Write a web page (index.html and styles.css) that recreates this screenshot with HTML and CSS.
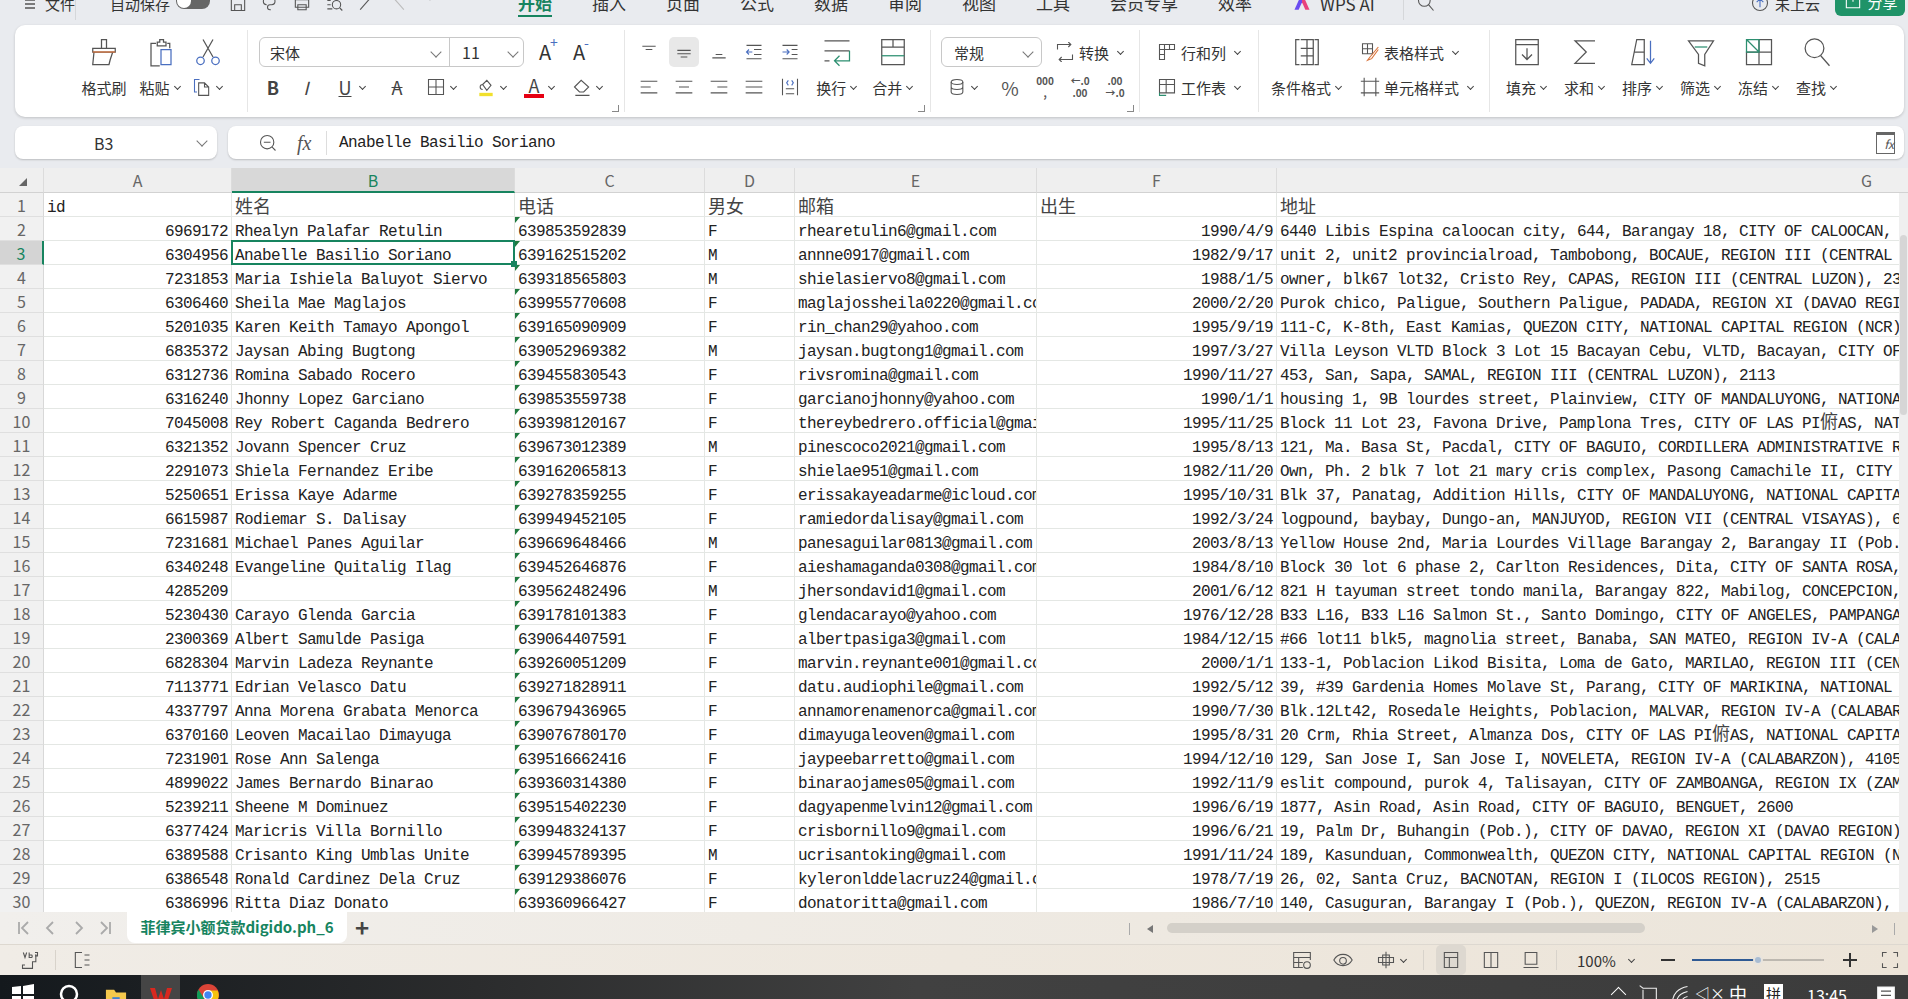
FILE: index.html
```html
<!DOCTYPE html>
<html lang="zh-CN">
<head>
    <meta charset="UTF-8">
    <title>digido.ph_6 - WPS</title>
    <link rel="stylesheet" href="styles.css">
</head>
<body>
    <header class="topbar">
        <div class="topbar-inner">
            <div class="quick">
                <svg class="menu-ic" viewBox="0 0 12 12"><path d="M1 3h10M1 7h10M1 11h10"/></svg>
                <span class="file-menu">文件</span>
                <span class="vsep"></span>
                <span class="autosave">自动保存</span>
                <span class="toggle"><i></i></span>
                <svg class="ic" viewBox="0 0 24 24"><path d="M4 3h13l3 3v15H4zM8 21v-7h8v7"/></svg>
                <svg class="ic" viewBox="0 0 24 24"><path d="M8 14a4 4 0 0 1 0-8h6a4 4 0 0 1 0 8h-2a3 3 0 0 0 0 6h1"/></svg>
                <svg class="ic" viewBox="0 0 24 24"><path d="M6 8V3h12v5M4 8h16v9H4zM7 14h10v6H7z"/></svg>
                <svg class="ic" viewBox="0 0 24 24"><path d="M4 4h8M4 9h4M4 14h4M4 19h6"/><circle cx="15" cy="14" r="5"/><path d="M19 18l3 3"/></svg>
                <svg class="ic" viewBox="0 0 24 24"><path d="M5 20L19 4"/></svg>
                <svg class="ic faint" viewBox="0 0 24 24"><path d="M19 20L5 4"/></svg>
                <svg class="ic" viewBox="0 0 24 24"><path d="M6 2l6 6 6-6"/></svg>
            </div>
            <nav class="tabs">
                <span class="tab active">开始</span>
                <span class="tab">插入</span>
                <span class="tab">页面</span>
                <span class="tab">公式</span>
                <span class="tab">数据</span>
                <span class="tab">审阅</span>
                <span class="tab">视图</span>
                <span class="tab">工具</span>
                <span class="tab">会员专享</span>
                <span class="tab">效率</span>
            </nav>
            <div class="wps-ai">
                <svg class="ai-logo" viewBox="0 0 24 24"><path class="ai-a" d="M12 0L3 20h5l4-9z"/><path class="ai-b" d="M12 0l9 20h-5l-4-9z"/></svg>
                <span class="ai-name">WPS AI</span>
                <span class="vsep"></span>
                <svg class="ic" viewBox="0 0 24 24"><circle cx="10" cy="9" r="7"/><path d="M15 14l6 7"/></svg>
            </div>
            <div class="cloud">
                <svg class="ic" viewBox="0 0 24 24"><circle cx="12" cy="12" r="9"/><path class="blue" d="M12 17V8M8 11l4-4 4 4"/></svg>
                <span>未上云</span>
            </div>
            <div class="share">
                <svg class="ic white" viewBox="0 0 24 24"><path d="M4 10v10h16V10M12 3v10"/></svg>
                <span>分享</span>
            </div>
        </div>
    </header>

    <section class="ribbon">
        <div class="group g-clip">
            <div class="tool col-brush">
                <span class="icon-box">
                    <svg class="ic-big" viewBox="0 0 24 24"><path d="M10 2h4v7h-4zM3 9h18v3H3zM4 12l-1 10h13l1-4 2-6"/><path class="orange" d="M3 12h18"/></svg>
                </span>
                <span class="lbl">格式刷</span>
            </div>
            <div class="tool col-paste">
                <span class="icon-box">
                    <svg class="ic-big" viewBox="0 0 24 24"><path d="M9 4h2V2h3v2h2v3H9zM8 5H4v18h7M17 5h2v4"/><path class="blue" d="M12 10h8v12h-8z"/></svg>
                </span>
                <span class="lbl">粘贴<i class="caret"></i></span>
            </div>
            <div class="tool col-cut">
                <span class="icon-box">
                    <svg class="ic-big" viewBox="0 0 24 24"><path d="M8 16L16 2M16 16L8 2"/><circle class="blue" cx="6" cy="19" r="3"/><circle class="blue" cx="18" cy="19" r="3"/></svg>
                </span>
                <span class="drop">
                    <svg class="ic" viewBox="0 0 24 24"><path class="blue" d="M9 3H3v15h3"/><path d="M8 7h7l5 5v10H8zM15 7v5h5"/></svg>
                    <i class="caret"></i>
                </span>
            </div>
        </div>

        <div class="group g-font">
            <div class="row">
                <div class="select font-select">
                    <span class="font-name">宋体</span><i class="chev"></i>
                    <span class="font-size">11</span><i class="chev"></i>
                </div>
                <span class="grow-a">A<sup class="blue-txt">+</sup></span>
                <span class="grow-a">A<sup class="blue-txt">-</sup></span>
            </div>
            <div class="row row-b">
                <span class="glyph bold">B</span>
                <span class="glyph italic">I</span>
                <span class="drop b-under"><span class="glyph under">U</span><i class="caret"></i></span>
                <span class="glyph strike">A</span>
                <span class="drop b-border">
                    <svg class="ic" viewBox="0 0 24 24"><path d="M3 3h18v18H3zM12 3v18M3 12h18"/></svg>
                    <i class="caret"></i>
                </span>
                <span class="drop b-fill">
                    <svg class="ic" viewBox="0 0 24 24"><path d="M8 9l5-5 5 6-5 6zM8 9a3 3 0 0 0 0 6"/><path class="yellow" d="M4 21h16"/></svg>
                    <i class="caret"></i>
                </span>
                <span class="drop">
                    <span class="glyph color-a">A</span>
                    <i class="caret"></i>
                </span>
                <span class="drop">
                    <svg class="ic" viewBox="0 0 24 24"><path d="M3 12l8-8 9 8-6 6H9zM4 22h17"/></svg>
                    <i class="caret"></i>
                </span>
            </div>
            <i class="launcher"></i>
        </div>

        <div class="group g-align">
            <div class="align-grid">
                <svg class="ic" viewBox="0 0 24 24"><path d="M4 5h16M8 9h8"/></svg>
                <span class="on"><svg class="ic" viewBox="0 0 24 24"><path d="M4 10h16M4 14h16M8 18h8"/></svg></span>
                <svg class="ic" viewBox="0 0 24 24"><path d="M8 15h8M4 19h16"/></svg>
                <svg class="ic" viewBox="0 0 24 24"><path d="M3 4h18M3 20h18M12 9h9M12 15h9"/><path class="blue" d="M10 12H3M6 9l-3 3 3 3"/></svg>
                <svg class="ic" viewBox="0 0 24 24"><path d="M3 4h18M3 20h18M14 9h7M14 15h7"/><path class="blue" d="M3 12h8M8 9l3 3-3 3"/></svg>
                <svg class="ic-big" viewBox="0 0 24 24"><path d="M2 3h20M2 11h20M2 19h4"/><path class="green" d="M22 11v8H10M14 15l-4 4 4 4"/></svg>
                <svg class="ic-big" viewBox="0 0 24 24"><path d="M3 2h18v20H3zM3 8h18M12 2v6"/><path class="green" d="M3 15h18"/></svg>
                <svg class="ic" viewBox="0 0 24 24"><path d="M2 5h20M2 12h12M2 19h20"/></svg>
                <svg class="ic" viewBox="0 0 24 24"><path d="M2 5h20M6 12h12M2 19h20"/></svg>
                <svg class="ic" viewBox="0 0 24 24"><path d="M2 5h20M10 12h12M2 19h20"/></svg>
                <svg class="ic" viewBox="0 0 24 24"><path d="M2 5h20M2 12h20M2 19h20"/></svg>
                <svg class="ic" viewBox="0 0 24 24"><path d="M3 2v20M21 2v20M7 14h10M7 20h10"/><path class="blue" d="M10 4L8 7l2 3M14 4l2 3-2 3"/></svg>
                <span class="lbl">换行<i class="caret"></i></span>
                <span class="lbl">合并<i class="caret"></i></span>
            </div>
            <i class="launcher"></i>
        </div>

        <div class="group g-num">
            <div class="row">
                <div class="select num-select"><span class="num-name">常规</span><i class="chev"></i></div>
                <span class="with-ic convert">
                    <svg class="ic" viewBox="0 0 24 24"><path d="M3 9V3h16M16 0l3 3-3 3M21 15v6H5M8 18l-3 3 3 3"/></svg>
                    转换<i class="caret"></i>
                </span>
            </div>
            <div class="row row-num">
                <span class="drop">
                    <svg class="ic" viewBox="0 0 24 24"><ellipse cx="12" cy="6" rx="7" ry="3"/><path d="M5 6v12c0 4 14 4 14 0V6M5 12c0 4 14 4 14 0"/></svg>
                    <i class="caret"></i>
                </span>
                <span class="num-btn percent">%</span>
                <span class="num-btn stack">000<br>,</span>
                <span class="num-btn stack">←.0<br>.00</span>
                <span class="num-btn stack">.00<br>→.0</span>
            </div>
            <i class="launcher"></i>
        </div>

        <div class="group g-cells">
            <span class="with-ic">
                <svg class="ic" viewBox="0 0 24 24"><path d="M3 3h6v18H3zM3 9h6M3 15h6M9 3h12v6H9zM15 3v6"/></svg>
                行和列<i class="caret"></i>
            </span>
            <span class="with-ic second">
                <svg class="ic" viewBox="0 0 24 24"><path d="M3 3h18v16H3zM3 9h18M11 3v16"/><path class="green" d="M3 19v3h8"/></svg>
                工作表<i class="caret"></i>
            </span>
        </div>

        <div class="group g-style">
            <div class="tool col-cond">
                <span class="icon-box">
                    <svg class="ic-big" viewBox="0 0 24 24"><path d="M6 2H3v20h3M18 2h3v20h-3M7 2h10v20H7M7 9h5v6H7M12 9h5M12 15h5M12 2v7M12 15v7"/></svg>
                </span>
                <span class="lbl">条件格式<i class="caret"></i></span>
            </div>
            <div class="style-col">
                <span class="with-ic">
                    <svg class="ic" viewBox="0 0 24 24"><path d="M3 2h12v12H3zM3 8h12M9 2v12"/><path class="orange" d="M22 6L12 18l-3 4 5-2 8-11"/></svg>
                    表格样式<i class="caret"></i>
                </span>
                <span class="with-ic second">
                    <svg class="ic" viewBox="0 0 24 24"><path d="M5 1v22M19 1v22M1 5h22M1 19h22"/></svg>
                    单元格样式<i class="caret"></i>
                </span>
            </div>
        </div>

        <div class="group g-edit">
            <div class="tool">
                <span class="icon-box"><svg class="ic-big" viewBox="0 0 24 24"><path d="M3 2h18v20H3zM3 6h18M12 9v9M8 14l4 4 4-4"/></svg></span>
                <span class="lbl">填充<i class="caret"></i></span>
            </div>
            <div class="tool">
                <span class="icon-box"><svg class="ic-big" viewBox="0 0 24 24"><path d="M20 3H4l9 9-9 9h16"/></svg></span>
                <span class="lbl">求和<i class="caret"></i></span>
            </div>
            <div class="tool">
                <span class="icon-box"><svg class="ic-big" viewBox="0 0 24 24"><path d="M7 2h6v20H3zM5 12h8"/><path class="blue" d="M18 3v18M15 17l3 4 3-4"/></svg></span>
                <span class="lbl">排序<i class="caret"></i></span>
            </div>
            <div class="tool">
                <span class="icon-box"><svg class="ic-big" viewBox="0 0 24 24"><path d="M2 3h20l-7 11v9l-5-2v-7z"/><path class="green" d="M7 8h10"/></svg></span>
                <span class="lbl">筛选<i class="caret"></i></span>
            </div>
            <div class="tool">
                <span class="icon-box"><svg class="ic-big" viewBox="0 0 24 24"><path d="M12 12h10v10H2V12h10v10M12 12V2h10v10"/><path class="green" d="M2 12V2h10v10zM2 2l10 10"/></svg></span>
                <span class="lbl">冻结<i class="caret"></i></span>
            </div>
            <div class="tool">
                <span class="icon-box"><svg class="ic-big" viewBox="0 0 24 24"><circle cx="10" cy="9" r="7.5"/><path d="M15 15l7 8"/></svg></span>
                <span class="lbl">查找<i class="caret"></i></span>
            </div>
        </div>
    </section>

    <section class="formula-bar">
        <div class="name-box"><span>B3</span><i class="chev"></i></div>
        <div class="formula">
            <svg class="ic zoom-ic" viewBox="0 0 24 24"><circle cx="11" cy="11" r="8"/><path d="M17 17l4 4M7 11h8"/></svg>
            <span class="fx">fx</span>
            <span class="formula-text">Anabelle Basilio Soriano</span>
            <span class="fx-box"><span>fx</span></span>
        </div>
    </section>

    <main class="sheet">
        <table>
            <colgroup>
                <col class="c-head"><col class="c-a"><col class="c-b"><col class="c-c"><col class="c-d"><col class="c-e"><col class="c-f"><col class="c-g">
            </colgroup>
            <thead>
                <tr>
                    <th class="corner"><i></i></th><th>A</th><th class="sel-col">B</th><th>C</th><th>D</th><th>E</th><th>F</th><th>G</th>
                </tr>
            </thead>
            <tbody>
                <tr class="title"><th>1</th><td>id</td><td class="cjk">姓名</td><td class="cjk">电话</td><td class="cjk">男女</td><td class="cjk">邮箱</td><td class="cjk">出生</td><td class="cjk">地址</td></tr>
                <tr><th>2</th><td>6969172</td><td>Rhealyn Palafar Retulin</td><td>639853592839</td><td>F</td><td>rhearetulin6@gmail.com</td><td>1990/4/9</td><td>6440 Libis Espina caloocan city, 644, Barangay 18, CITY OF CALOOCAN,</td></tr>
                <tr class="sel-row"><th>3</th><td>6304956</td><td class="active-cell">Anabelle Basilio Soriano</td><td>639162515202</td><td>M</td><td>annne0917@gmail.com</td><td>1982/9/17</td><td>unit 2, unit2 provincialroad, Tambobong, BOCAUE, REGION III (CENTRAL</td></tr>
                <tr><th>4</th><td>7231853</td><td>Maria Ishiela Baluyot Siervo</td><td>639318565803</td><td>M</td><td>shielasiervo8@gmail.com</td><td>1988/1/5</td><td>owner, blk67 lot32, Cristo Rey, CAPAS, REGION III (CENTRAL LUZON), 23</td></tr>
                <tr><th>5</th><td>6306460</td><td>Sheila Mae Maglajos</td><td>639955770608</td><td>F</td><td>maglajossheila0220@gmail.com</td><td>2000/2/20</td><td>Purok chico, Paligue, Southern Paligue, PADADA, REGION XI (DAVAO REGI</td></tr>
                <tr><th>6</th><td>5201035</td><td>Karen Keith Tamayo Apongol</td><td>639165090909</td><td>F</td><td>rin_chan29@yahoo.com</td><td>1995/9/19</td><td>111-C, K-8th, East Kamias, QUEZON CITY, NATIONAL CAPITAL REGION (NCR)</td></tr>
                <tr><th>7</th><td>6835372</td><td>Jaysan Abing Bugtong</td><td>639052969382</td><td>M</td><td>jaysan.bugtong1@gmail.com</td><td>1997/3/27</td><td>Villa Leyson VLTD Block 3 Lot 15 Bacayan Cebu, VLTD, Bacayan, CITY OF</td></tr>
                <tr><th>8</th><td>6312736</td><td>Romina Sabado Rocero</td><td>639455830543</td><td>F</td><td>rivsromina@gmail.com</td><td>1990/11/27</td><td>453, San, Sapa, SAMAL, REGION III (CENTRAL LUZON), 2113</td></tr>
                <tr><th>9</th><td>6316240</td><td>Jhonny Lopez Garciano</td><td>639853559738</td><td>F</td><td>garcianojhonny@yahoo.com</td><td>1990/1/1</td><td>housing 1, 9B lourdes street, Plainview, CITY OF MANDALUYONG, NATIONA</td></tr>
                <tr><th>10</th><td>7045008</td><td>Rey Robert Caganda Bedrero</td><td>639398120167</td><td>F</td><td>thereybedrero.official@gmail.com</td><td>1995/11/25</td><td>Block 11 Lot 23, Favona Drive, Pamplona Tres, CITY OF LAS PI<span class="cjk">俯</span>AS, NAT</td></tr>
                <tr><th>11</th><td>6321352</td><td>Jovann Spencer Cruz</td><td>639673012389</td><td>M</td><td>pinescoco2021@gmail.com</td><td>1995/8/13</td><td>121, Ma. Basa St, Pacdal, CITY OF BAGUIO, CORDILLERA ADMINISTRATIVE R</td></tr>
                <tr><th>12</th><td>2291073</td><td>Shiela Fernandez Eribe</td><td>639162065813</td><td>F</td><td>shielae951@gmail.com</td><td>1982/11/20</td><td>Own, Ph. 2 blk 7 lot 21 mary cris complex, Pasong Camachile II, CITY</td></tr>
                <tr><th>13</th><td>5250651</td><td>Erissa Kaye Adarme</td><td>639278359255</td><td>F</td><td>erissakayeadarme@icloud.com</td><td>1995/10/31</td><td>Blk 37, Panatag, Addition Hills, CITY OF MANDALUYONG, NATIONAL CAPITA</td></tr>
                <tr><th>14</th><td>6615987</td><td>Rodiemar S. Dalisay</td><td>639949452105</td><td>F</td><td>ramiedordalisay@gmail.com</td><td>1992/3/24</td><td>logpound, baybay, Dungo-an, MANJUYOD, REGION VII (CENTRAL VISAYAS), 6</td></tr>
                <tr><th>15</th><td>7231681</td><td>Michael Panes Aguilar</td><td>639669648466</td><td>M</td><td>panesaguilar0813@gmail.com</td><td>2003/8/13</td><td>Yellow House 2nd, Maria Lourdes Village Barangay 2, Barangay II (Pob.</td></tr>
                <tr><th>16</th><td>6340248</td><td>Evangeline Quitalig Ilag</td><td>639452646876</td><td>F</td><td>aieshamaganda0308@gmail.com</td><td>1984/8/10</td><td>Block 30 lot 6 phase 2, Carlton Residences, Dita, CITY OF SANTA ROSA,</td></tr>
                <tr><th>17</th><td>4285209</td><td></td><td>639562482496</td><td>M</td><td>jhersondavid1@gmail.com</td><td>2001/6/12</td><td>821 H tayuman street tondo manila, Barangay 822, Mabilog, CONCEPCION,</td></tr>
                <tr><th>18</th><td>5230430</td><td>Carayo Glenda Garcia</td><td>639178101383</td><td>F</td><td>glendacarayo@yahoo.com</td><td>1976/12/28</td><td>B33 L16, B33 L16 Salmon St., Santo Domingo, CITY OF ANGELES, PAMPANGA</td></tr>
                <tr><th>19</th><td>2300369</td><td>Albert Samulde Pasiga</td><td>639064407591</td><td>F</td><td>albertpasiga3@gmail.com</td><td>1984/12/15</td><td>#66 lot11 blk5, magnolia street, Banaba, SAN MATEO, REGION IV-A (CALA</td></tr>
                <tr><th>20</th><td>6828304</td><td>Marvin Ladeza Reynante</td><td>639260051209</td><td>F</td><td>marvin.reynante001@gmail.com</td><td>2000/1/1</td><td>133-1, Poblacion Likod Bisita, Loma de Gato, MARILAO, REGION III (CEN</td></tr>
                <tr><th>21</th><td>7113771</td><td>Edrian Velasco Datu</td><td>639271828911</td><td>F</td><td>datu.audiophile@gmail.com</td><td>1992/5/12</td><td>39, #39 Gardenia Homes Molave St, Parang, CITY OF MARIKINA, NATIONAL</td></tr>
                <tr><th>22</th><td>4337797</td><td>Anna Morena Grabata Menorca</td><td>639679436965</td><td>F</td><td>annamorenamenorca@gmail.com</td><td>1990/7/30</td><td>Blk.12Lt42, Rosedale Heights, Poblacion, MALVAR, REGION IV-A (CALABAR</td></tr>
                <tr><th>23</th><td>6370160</td><td>Leoven Macailao Dimayuga</td><td>639076780170</td><td>F</td><td>dimayugaleoven@gmail.com</td><td>1995/8/31</td><td>20 Crm, Rhia Street, Almanza Dos, CITY OF LAS PI<span class="cjk">俯</span>AS, NATIONAL CAPITA</td></tr>
                <tr><th>24</th><td>7231901</td><td>Rose Ann Salenga</td><td>639516662416</td><td>F</td><td>jaypeebarretto@gmail.com</td><td>1994/12/10</td><td>129, San Jose I, San Jose I, NOVELETA, REGION IV-A (CALABARZON), 4105</td></tr>
                <tr><th>25</th><td>4899022</td><td>James Bernardo Binarao</td><td>639360314380</td><td>F</td><td>binaraojames05@gmail.com</td><td>1992/11/9</td><td>eslit compound, purok 4, Talisayan, CITY OF ZAMBOANGA, REGION IX (ZAM</td></tr>
                <tr><th>26</th><td>5239211</td><td>Sheene M Dominuez</td><td>639515402230</td><td>F</td><td>dagyapenmelvin12@gmail.com</td><td>1996/6/19</td><td>1877, Asin Road, Asin Road, CITY OF BAGUIO, BENGUET, 2600</td></tr>
                <tr><th>27</th><td>6377424</td><td>Maricris Villa Bornillo</td><td>639948324137</td><td>F</td><td>crisbornillo9@gmail.com</td><td>1996/6/21</td><td>19, Palm Dr, Buhangin (Pob.), CITY OF DAVAO, REGION XI (DAVAO REGION)</td></tr>
                <tr><th>28</th><td>6389588</td><td>Crisanto King Umblas Unite</td><td>639945789395</td><td>M</td><td>ucrisantoking@gmail.com</td><td>1991/11/24</td><td>189, Kasunduan, Commonwealth, QUEZON CITY, NATIONAL CAPITAL REGION (N</td></tr>
                <tr><th>29</th><td>6386548</td><td>Ronald Cardinez Dela Cruz</td><td>639129386076</td><td>F</td><td>kyleronlddelacruz24@gmail.com</td><td>1978/7/19</td><td>26, 02, Santa Cruz, BACNOTAN, REGION I (ILOCOS REGION), 2515</td></tr>
                <tr><th>30</th><td>6386996</td><td>Ritta Diaz Donato</td><td>639360966427</td><td>F</td><td>donatoritta@gmail.com</td><td>1986/7/10</td><td>140, Casuguran, Barangay I (Pob.), QUEZON, REGION IV-A (CALABARZON),</td></tr>
            </tbody>
        </table>
        <div class="vscroll"><i class="vthumb"></i></div>
    </main>

    <section class="sheet-tabs">
        <div class="tab-nav">
            <svg class="nav-ic" viewBox="0 0 16 16"><path d="M3 2v12M12 2L6 8l6 6"/></svg>
            <svg class="nav-ic" viewBox="0 0 16 16"><path d="M10 2L4 8l6 6"/></svg>
            <svg class="nav-ic" viewBox="0 0 16 16"><path d="M6 2l6 6-6 6"/></svg>
            <svg class="nav-ic" viewBox="0 0 16 16"><path d="M13 2v12M4 2l6 6-6 6"/></svg>
        </div>
        <div class="sheet-tab">菲律宾小额贷款digido.ph_6</div>
        <span class="add-tab">+</span>
        <span class="hsep"></span>
        <i class="arrow-left"></i>
        <div class="htrack"><i class="hthumb"></i></div>
        <i class="arrow-right"></i>
        <span class="hsep last"></span>
    </section>

    <footer class="statusbar">
        <svg class="ic st-vba" viewBox="0 0 24 24"><path d="M6 18H3v4h12v-8h4V5M4 3l2 6 2-6M11 3v6h3a2 2 0 0 0 0-3h-3M18 3h3v4h-3"/></svg>
        <span class="st-sep"></span>
        <svg class="ic st-list" viewBox="0 0 24 24"><path d="M12 3H4v18h8M15 6h6M15 12h6M15 18h6"/></svg>
        <div class="st-right">
            <svg class="ic" viewBox="0 0 24 24"><path d="M2 3h20v6H2zM2 9v12h11M2 15h11M8 9v12M22 9v3"/><circle cx="18" cy="18" r="4"/></svg>
            <svg class="ic st-eye" viewBox="0 0 24 24"><path d="M1 12c5-9 17-9 22 0-5 9-17 9-22 0z"/><circle cx="12" cy="13" r="4"/></svg>
            <span class="drop st-focus">
                <svg class="ic" viewBox="0 0 24 24"><path d="M8 6h8v12H8zM12 2v20M3 9h18v6H3z"/></svg>
                <i class="caret"></i>
            </span>
            <span class="st-sep sep-a"></span>
            <span class="view on"><svg class="ic" viewBox="0 0 24 24"><path d="M4 3h16v18H4zM4 9h16M10 9v12"/></svg></span>
            <span class="view"><svg class="ic" viewBox="0 0 24 24"><path d="M4 3h16v18H4zM12 3v18"/></svg></span>
            <span class="view"><svg class="ic" viewBox="0 0 24 24"><path d="M5 3h14v14H5zM3 21h18"/></svg></span>
            <span class="st-sep sep-b"></span>
            <span class="zoom-val">100%</span>
            <i class="caret"></i>
            <span class="zoom-btn minus"></span>
            <div class="slider"><i class="knob"></i></div>
            <span class="zoom-btn plus"></span>
            <svg class="ic st-full" viewBox="0 0 24 24"><path d="M3 8V3h5M16 3h5v5M21 16v5h-5M8 21H3v-5"/></svg>
        </div>
    </footer>

    <div class="taskbar">
        <svg class="win" viewBox="0 0 22 22"><path d="M0 3l9-1v8H0zM11 2l11-2v10H11zM0 12h9v8l-9-1zM11 12h11v10l-11-2z"/></svg>
        <svg class="search-ring" viewBox="0 0 24 24"><circle cx="12" cy="11" r="8"/></svg>
        <svg class="folder" viewBox="0 0 24 24"><path class="f-back" d="M1 2h9l2 3h11v19H1z"/><path class="f-front" d="M8 10h8v6H8z"/></svg>
        <span class="wps-task">
            <svg viewBox="0 0 24 24"><path class="wps-w" d="M1 3h5l3 11 3-9 3 9 3-11h5l-6 18h-4l-1-5-1 5H7z"/></svg>
        </span>
        <svg class="chrome" viewBox="0 0 24 24"><circle class="c-red" cx="12" cy="12" r="12"/><path class="c-yellow" d="M12 7h10.5A12 12 0 0 1 8 23.400L12 12z"/><path class="c-green" d="M12 24A12 12 0 0 1 1.600 6L8 16z"/><circle class="c-white" cx="12" cy="12" r="5.500"/><circle class="c-blue" cx="12" cy="12" r="4"/></svg>
        <div class="tray">
            <i class="tray-up"></i>
            <svg class="tray-ic" viewBox="0 0 24 24"><path d="M2 2l4 3h16v15H6V7"/></svg>
            <svg class="tray-ic wifi" viewBox="0 0 24 24"><path d="M3 22C3 12 10 5 21 3M8 22c0-7 5-11 13-13M14 22c0-3 3-6 7-7"/></svg>
            <span class="speaker">◁×</span>
            <span class="ime">中</span>
            <span class="ime-box">拼</span>
            <span class="clock">13:45</span>
            <svg class="tray-ic notify" viewBox="0 0 24 24"><path class="note-bg" d="M2 0h20v24H2z"/><path class="note-line" d="M6 5h12M6 10h12M6 15h8"/></svg>
        </div>
    </div>
</body>
</html>
```

FILE: styles.css
```css
:root {
    --green: #17845f;
    --ink: #333;
    --icon: #555;
    --grid: #e4e7e4;
    --ui-font: "Noto Sans CJK SC", "Noto Sans", sans-serif;
    --cell-font: "Liberation Mono", "Noto Sans CJK SC", monospace;
}

* {
    box-sizing: border-box;
}

html, body {
    margin: 0;
    padding: 0;
}

body {
    width: 1908px;
    height: 999px;
    overflow: hidden;
    display: flex;
    flex-direction: column;
    background: #e9ebef;
    color: var(--ink);
    font-family: var(--ui-font);
    font-size: 15px;
}

i {
    font-style: normal;
}

svg {
    fill: none;
    stroke: var(--icon);
    stroke-width: 1.3;
    flex-shrink: 0;
}

svg .blue { stroke: #4a6fc0; }
svg .green { stroke: #2c8f70; }
svg .orange { stroke: #d9733a; }
svg .yellow { stroke: #f1e02c; stroke-width: 4; }

.ic {
    width: 20px;
    height: 20px;
}

.ic-big {
    width: 30px;
    height: 30px;
    stroke-width: 1;
}

/* top menu, cut off by the edge of the photo */
.topbar {
    height: 25px;
    overflow: hidden;
    flex-shrink: 0;
}

.topbar-inner {
    height: 34px;
    margin-top: -14px;
    display: flex;
    align-items: center;
}

.quick {
    width: 518px;
    display: flex;
    align-items: center;
    padding-left: 24px;
}

.menu-ic {
    width: 12px;
    height: 12px;
    margin-right: 9px;
}

.file-menu {
    width: 30px;
    white-space: nowrap;
}

.vsep {
    width: 1px;
    height: 34px;
    background: #d5d7da;
}

.quick .vsep:first-of-type {
    margin-left: 15px;
}

.autosave {
    margin-left: 34px;
    white-space: nowrap;
}

.toggle {
    width: 34px;
    height: 16px;
    margin: 0 18px 0 6px;
    border-radius: 8px;
    background: #666;
    position: relative;
    top: -2px;
}

.toggle i {
    position: absolute;
    left: 1px;
    top: 1px;
    width: 14px;
    height: 14px;
    border-radius: 50%;
    background: #fff;
}

.quick .ic {
    margin-right: 12px;
}

.quick .faint {
    stroke: #bbb;
}

.tabs {
    display: flex;
    gap: 40px;
    width: 761px;
}

.tab {
    font-size: 17px;
    line-height: 34px;
    white-space: nowrap;
    position: relative;
}

.tab.active {
    color: var(--green);
    font-weight: 700;
}

.tab.active::after {
    content: '';
    position: absolute;
    left: 0;
    right: 0;
    bottom: 3px;
    height: 2px;
    background: var(--green);
}

.wps-ai {
    display: flex;
    align-items: center;
    margin-left: 13px;
    white-space: nowrap;
}

.ai-name {
    width: 55px;
    font-size: 17px;
}

.ai-logo {
    width: 20px;
    height: 20px;
    stroke: none;
    margin-right: 8px;
}

.ai-a { fill: #6a4cf0; }
.ai-b { fill: #e8437c; }

.wps-ai .vsep {
    margin: 0 12px 0 28px;
}

.cloud {
    display: flex;
    align-items: center;
    gap: 5px;
    margin-left: 314px;
    white-space: nowrap;
}

.share {
    width: 70px;
    height: 30px;
    align-self: flex-start;
    margin-left: 15px;
    border-radius: 0 0 6px 6px;
    background: #1f9368;
    color: #fff;
    display: flex;
    align-items: center;
    justify-content: center;
    gap: 5px;
}

.ic.white {
    stroke: #fff;
}

/* ribbon */
.ribbon {
    height: 92px;
    margin: 0 4px 0 15px;
    flex-shrink: 0;
    display: flex;
    background: #fff;
    border-radius: 10px;
    box-shadow: 0 1px 3px rgba(0, 0, 0, 0.18);
}

.group {
    position: relative;
    margin: 5px 0;
    padding-top: 7px;
    border-right: 1px solid #e6e6e6;
}

.g-clip { width: 233px; padding-left: 60px; display: flex; }
.g-font { width: 377px; padding-left: 11px; }
.g-align { width: 306px; padding-left: 6px; }
.g-num { width: 209px; padding-left: 10px; }
.g-cells { width: 119px; padding-left: 17px; display: flex; flex-direction: column; align-items: flex-start; }
.g-style { width: 231px; padding-left: 8px; display: flex; }
.g-edit { flex: 1; padding-left: 8px; display: flex; border-right: 0; }

.tool {
    display: flex;
    flex-direction: column;
    align-items: center;
    width: 58px;
}

.col-brush { width: 58px; }
.col-paste { width: 55px; }
.col-cut { width: 40px; }
.col-cond { width: 80px; }

.icon-box {
    height: 30px;
    display: flex;
    align-items: center;
    justify-content: center;
}

.lbl {
    height: 24px;
    margin-top: 8px;
    display: flex;
    align-items: center;
    white-space: nowrap;
}

.tool .drop {
    height: 24px;
    margin-top: 8px;
}

.caret {
    display: inline-block;
    width: 5px;
    height: 5px;
    margin: -2px 2px 0 5px;
    border-right: 1.5px solid #444;
    border-bottom: 1.5px solid #444;
    transform: rotate(45deg);
    flex-shrink: 0;
}

.chev {
    display: inline-block;
    width: 8px;
    height: 8px;
    border-right: 1px solid #777;
    border-bottom: 1px solid #777;
    transform: rotate(45deg);
    flex-shrink: 0;
}

.drop {
    display: flex;
    align-items: center;
}

.row {
    display: flex;
    align-items: center;
    height: 30px;
}

.select {
    height: 30px;
    display: flex;
    align-items: center;
    border: 1px solid #c8c8c8;
    border-radius: 6px;
}

.font-select {
    width: 265px;
}

.font-name {
    width: 172px;
    padding-left: 10px;
}

.font-select .chev:first-of-type {
    margin-right: 9px;
}

.font-size {
    width: 60px;
    height: 28px;
    line-height: 28px;
    padding-left: 12px;
    border-left: 1px solid #c8c8c8;
    font-size: 16px;
}

.grow-a {
    width: 17px;
    margin-left: 15px;
    margin-right: 2px;
    font-size: 20px;
    line-height: 30px;
    position: relative;
}

.grow-a sup {
    position: absolute;
    top: -5px;
    left: 11px;
    font-size: 14px;
    line-height: 20px;
}

.blue-txt {
    color: #4a6fc0;
}

.row-b {
    height: 24px;
    margin-top: 8px;
    padding-left: 4px;
    gap: 16px;
}

.b-under { margin-left: 3px; }
.glyph.strike { margin-left: 4px; }
.b-border { margin-left: 3px; }
.b-fill { margin-left: 2px; }

.glyph {
    width: 20px;
    text-align: center;
    font-size: 18px;
    line-height: 24px;
    color: #444;
}

.glyph.bold { font-weight: 700; }
.glyph.italic { font-style: italic; margin-left: -3px; }
.glyph.under { text-decoration: underline; }
.glyph.strike { text-decoration: line-through; }

.glyph.color-a {
    border-bottom: 4px solid #e60012;
    line-height: 18px;
    height: 22px;
}

.launcher {
    position: absolute;
    right: 5px;
    bottom: 0;
    width: 7px;
    height: 7px;
    border-right: 1px solid #888;
    border-bottom: 1px solid #888;
}

.align-grid {
    display: grid;
    grid-template-columns: repeat(5, 35.25px) 60px 52px;
    grid-template-rows: 30px 24px;
    row-gap: 8px;
    align-items: center;
    justify-items: center;
}

.align-grid .lbl {
    margin-top: 0;
}

.align-grid .on {
    width: 30px;
    height: 30px;
    border-radius: 5px;
    background: #e8e8e8;
    display: flex;
    align-items: center;
    justify-content: center;
}

.num-select {
    width: 101px;
}

.num-name {
    width: 82px;
    padding-left: 12px;
}

.with-ic {
    display: flex;
    align-items: center;
    gap: 4px;
    height: 30px;
    white-space: nowrap;
}

.with-ic.second {
    height: 24px;
    margin-top: 8px;
}

.convert {
    margin-left: 13px;
}

.row-num {
    height: 24px;
    margin-top: 8px;
    padding-left: 6px;
}

.num-btn {
    width: 20px;
    margin-left: 15px;
    text-align: center;
    color: #555;
}

.row-num .num-btn:nth-child(2) {
    margin-left: 21px;
}

.percent {
    font-size: 19px;
}

.stack {
    font-size: 10px;
    line-height: 12px;
    white-space: nowrap;
    font-weight: 700;
}

.style-col {
    margin-left: 13px;
    display: flex;
    flex-direction: column;
}

/* name box and formula line */
.formula-bar {
    height: 33px;
    margin: 9px 4px 9px 15px;
    flex-shrink: 0;
    display: flex;
    gap: 11px;
}

.name-box, .formula {
    background: #fff;
    border-radius: 8px;
    box-shadow: 0 1px 2px rgba(0, 0, 0, 0.2);
    display: flex;
    align-items: center;
}

.name-box {
    width: 202px;
    padding-left: 79px;
    font-size: 16px;
}

.name-box .chev {
    margin-left: 85px;
    margin-top: -4px;
}

.formula {
    flex: 1;
    padding-left: 30px;
}

.fx {
    margin: 0 12px 0 19px;
    width: 21px;
    font-family: "Liberation Serif", serif;
    font-style: italic;
    font-size: 20px;
    color: #555;
    border-right: 1px solid #ddd;
    box-sizing: content-box;
    padding-right: 8px;
    line-height: 24px;
}

.formula-text {
    flex: 1;
    font-family: var(--cell-font);
    font-size: 16px;
    letter-spacing: -0.6px;
    color: #222;
}

.fx-box {
    width: 19px;
    height: 22px;
    margin-right: 9px;
    border: 1px solid #666;
    border-top-width: 3px;
    border-right-width: 1px;
    font-size: 12px;
    line-height: 18px;
    text-align: right;
    color: #555;
    font-style: italic;
}

/* grid */
.sheet {
    position: relative;
    height: 744px;
    flex-shrink: 0;
    overflow: hidden;
    background: #fff;
}

table {
    table-layout: fixed;
    width: 2457px;
    border-collapse: separate;
    border-spacing: 0;
}

.c-head { width: 44px; }
.c-a { width: 188px; }
.c-b { width: 283px; }
.c-c { width: 190px; }
.c-d { width: 90px; }
.c-e { width: 242px; }
.c-f { width: 240px; }
.c-g { width: 1180px; }

thead th {
    height: 25px;
    padding: 0;
    background: #efefef;
    border-right: 1px solid #dcdcdc;
    border-bottom: 1px solid #d2d2d2;
    font-weight: 400;
    font-size: 16px;
    line-height: 20px;
    color: #666;
}

thead th.sel-col {
    background: #d8d8d8;
    color: var(--green);
    border-bottom: 2px solid var(--green);
}

.corner i {
    display: block;
    width: 0;
    height: 0;
    margin: 4px 0 0 19px;
    border-left: 8px solid transparent;
    border-bottom: 8px solid #666;
}

tbody th {
    height: 24px;
    padding: 0;
    background: #f1f1f1;
    border-right: 1px solid #d8d8d8;
    border-bottom: 1px solid #dfdfdf;
    font-weight: 400;
    font-size: 16px;
    line-height: 20px;
    color: #666;
}

.sel-row th {
    background: #d4d4d4;
    color: var(--green);
    border-right: 2px solid var(--green);
}

td {
    height: 24px;
    padding: 7px 3px 0;
    position: relative;
    overflow: hidden;
    white-space: nowrap;
    border-right: 1px solid var(--grid);
    border-bottom: 1px solid var(--grid);
    font-family: var(--cell-font);
    font-size: 16px;
    letter-spacing: -0.6px;
    line-height: 16px;
    color: #222;
}

td:nth-child(2), td:nth-child(7) {
    text-align: right;
}

tr.title td {
    padding-top: 1px;
    line-height: 20px;
    text-align: left;
}

tr.title td:nth-child(2) {
    padding-top: 7px;
    line-height: 16px;
}

tbody tr:not(.title) td:nth-child(4)::before {
    content: '';
    position: absolute;
    left: 0;
    top: 0;
    border-top: 6px solid #1f7a3f;
    border-right: 5px solid transparent;
}

.cjk {
    font-family: "Noto Sans CJK SC", sans-serif;
    font-size: 18px;
    letter-spacing: 0;
    font-weight: 400;
    color: #444;
}

span.cjk {
    line-height: 0;
    vertical-align: baseline;
}

td.active-cell {
    overflow: visible;
    z-index: 2;
}

td.active-cell::after {
    content: '';
    position: absolute;
    left: -1px;
    top: -1px;
    right: -1px;
    bottom: -1px;
    border: 2px solid var(--green);
}

td.active-cell::before {
    content: '';
    position: absolute;
    right: -3px;
    bottom: -3px;
    width: 6px;
    height: 6px;
    background: var(--green);
    z-index: 1;
}

.vscroll {
    position: absolute;
    left: 1899px;
    right: 0;
    top: 25px;
    bottom: 0;
    background: #efefef;
}

.vthumb {
    position: absolute;
    left: 1px;
    right: 1px;
    top: 42px;
    height: 180px;
    border-radius: 4px;
    background: #d6d6d6;
}

/* sheet tabs */
.sheet-tabs {
    height: 33px;
    flex-shrink: 0;
    display: flex;
    align-items: flex-start;
    background: linear-gradient(90deg, #f1efec, #ece5da);
    border-bottom: 1px solid #ddd8d0;
}

.tab-nav {
    width: 127px;
    height: 32px;
    display: flex;
    align-items: center;
    gap: 11px;
    padding-left: 16px;
}

.nav-ic {
    width: 16px;
    height: 16px;
    stroke: #aaa;
    stroke-width: 1.8;
}

.sheet-tab {
    width: 220px;
    height: 31px;
    border-radius: 0 0 8px 8px;
    background: #fff;
    color: var(--green);
    font-weight: 700;
    font-size: 15px;
    line-height: 30px;
    text-align: center;
    white-space: nowrap;
}

.add-tab {
    width: 14px;
    margin-left: 8px;
    font-size: 24px;
    font-weight: 700;
    line-height: 30px;
    color: #444;
}

.hsep {
    width: 1px;
    height: 12px;
    margin: 11px 0 0 760px;
    background: #aaa;
}

.hsep.last {
    margin-left: 16px;
}

.arrow-left, .arrow-right {
    width: 0;
    height: 0;
    margin-top: 13px;
    border-top: 4px solid transparent;
    border-bottom: 4px solid transparent;
}

.arrow-left {
    margin-left: 17px;
    border-right: 6px solid #777;
}

.arrow-right {
    border-left: 6px solid #999;
}

.htrack {
    width: 705px;
    margin: 11px 0 0 14px;
    height: 10px;
}

.hthumb {
    display: block;
    width: 478px;
    height: 10px;
    border-radius: 5px;
    background: #d4d0c9;
}

/* status bar */
.statusbar {
    height: 30px;
    flex-shrink: 0;
    display: flex;
    align-items: center;
    padding-left: 20px;
    background: linear-gradient(90deg, #f0ece6, #ece4d8);
}

.st-sep {
    width: 1px;
    height: 20px;
    background: #d8d3cb;
}

.statusbar > .st-sep {
    margin: 0 16px 0 15px;
}

.st-right {
    margin-left: auto;
    display: flex;
    align-items: center;
    height: 30px;
    width: 616px;
}

.st-eye {
    margin-left: 21px;
}

.st-focus {
    margin-left: 23px;
}

.sep-a {
    margin: 0 12px 0 15px;
}

.sep-b {
    margin: 0 20px 0 10px;
}

.view {
    width: 30px;
    height: 30px;
    margin-right: 10px;
    display: flex;
    align-items: center;
    justify-content: center;
}

.view.on {
    background: #ddd8d0;
    border-radius: 5px;
}

.st-right .view:nth-of-type(5) {
    margin-right: 0;
}

.zoom-val {
    font-size: 15px;
    width: 47px;
    white-space: nowrap;
}

.zoom-btn {
    width: 14px;
    height: 14px;
    position: relative;
    margin-left: 25px;
}

.zoom-btn::before {
    content: '';
    position: absolute;
    left: 0;
    right: 0;
    top: 6px;
    height: 2px;
    background: #333;
}

.plus::after {
    content: '';
    position: absolute;
    top: 0;
    bottom: 0;
    left: 6px;
    width: 2px;
    background: #333;
}

.slider {
    position: relative;
    width: 132px;
    height: 2px;
    margin: 0 19px 0 17px;
    background: linear-gradient(90deg, #2f5a94 50%, #bdb8b0 50%);
}

.knob {
    position: absolute;
    left: 61px;
    top: -4px;
    width: 10px;
    height: 10px;
    border-radius: 50%;
    background: #a9bcd2;
    border: 2px solid #e8e4de;
}

.plus {
    margin-left: 0;
}

.st-full {
    margin-left: 23px;
}

/* windows taskbar, the lower part is outside the photo */
.taskbar {
    height: 24px;
    flex-shrink: 0;
    overflow: hidden;
    display: flex;
    align-items: flex-start;
    background: linear-gradient(90deg, #14191d 0%, #2b2c2d 25%, #414141 48%, #3c3c3c 100%);
    color: #fff;
}

.taskbar svg {
    stroke: none;
}

.win {
    width: 22px;
    height: 22px;
    margin: 9px 0 0 12px;
    fill: #fff;
}

.taskbar .search-ring {
    width: 24px;
    height: 24px;
    margin: 8px 0 0 23px;
    stroke: #fff;
    stroke-width: 2.5;
}

.folder {
    width: 22px;
    height: 26px;
    margin: 11px 0 0 24px;
}

.f-back { fill: #f5c84c; }
.f-front { fill: #3f7fd0; }

.wps-task {
    width: 39px;
    height: 24px;
    margin-left: 14px;
    background: #454545;
    display: flex;
    justify-content: center;
    padding-top: 10px;
}

.wps-task svg {
    width: 24px;
    height: 24px;
}

.wps-w { fill: #d8281f; }

.chrome {
    width: 22px;
    height: 22px;
    margin: 9px 0 0 17px;
}

.c-red { fill: #db4437; }
.c-yellow { fill: #f4c20d; }
.c-green { fill: #0f9d58; }
.c-white { fill: #fff; }
.c-blue { fill: #4285f4; }

.tray {
    margin-left: auto;
    display: flex;
    align-items: flex-start;
    height: 40px;
    width: 295px;
    padding-top: 9px;
}

.tray-up {
    width: 11px;
    height: 11px;
    margin: 5px 14px 0 0;
    border-left: 1.5px solid #fff;
    border-top: 1.5px solid #fff;
    transform: rotate(45deg);
}

.taskbar .tray-ic {
    width: 20px;
    height: 20px;
    stroke: #eee;
    margin-right: 12px;
}

.taskbar .wifi {
    margin-right: 5px;
}

.speaker {
    font-size: 15px;
    line-height: 18px;
    white-space: nowrap;
}

.ime {
    margin-left: 4px;
    font-size: 18px;
    line-height: 18px;
}

.ime-box {
    margin-left: 17px;
    width: 19px;
    height: 22px;
    background: #fff;
    color: #222;
    font-size: 15px;
    line-height: 20px;
    text-align: center;
}

.clock {
    margin-left: 24px;
    font-size: 16px;
    line-height: 22px;
}

.taskbar .notify {
    margin: 1px 0 0 29px;
    width: 20px;
    height: 24px;
}

.note-bg { fill: #fff; }
.note-line { stroke: #555; stroke-width: 1.4; fill: none; }
```
